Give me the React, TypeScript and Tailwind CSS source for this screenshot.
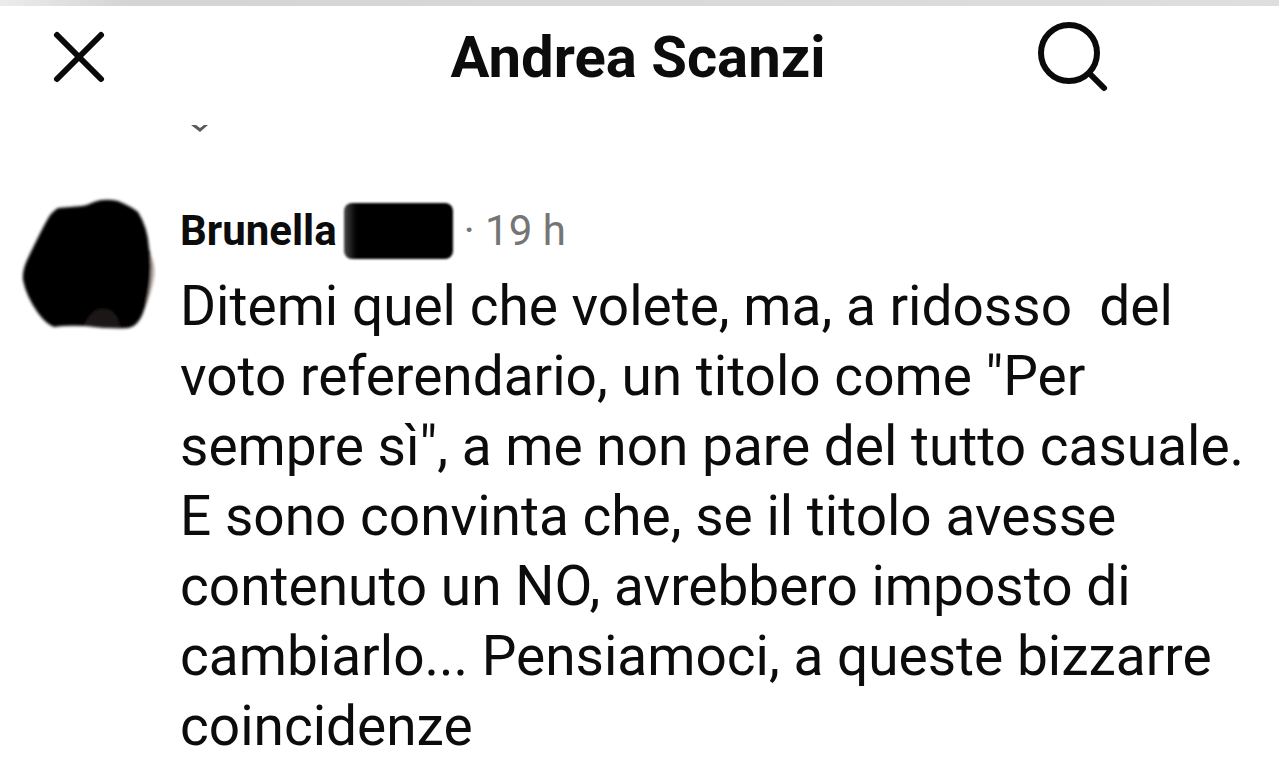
const comment = {
  author: 'Brunella',
  time: '19 h',
  text: 'Ditemi quel che volete, ma, a ridosso  del voto referendario, un titolo come "Per sempre sì", a me non pare del tutto casuale. E sono convinta che, se il titolo avesse contenuto un NO, avrebbero imposto di cambiarlo... Pensiamoci, a queste bizzarre coincidenze',
};

function Header({ title }: { title: string }) {
  return (
    <header className="grid grid-cols-[1fr_auto_1fr] items-center h-[102px] pl-[49px] pr-[52px]">
      <button type="button" aria-label="Chiudi" className="justify-self-start">
        <svg width="60" height="60" viewBox="0 0 60 60" fill="none" stroke="#0a0a0a" strokeWidth="6" strokeLinecap="round">
          <path d="M8 8 L52 52 M52 8 L8 52" />
        </svg>
      </button>
      <h1 className="text-[58px] leading-[70px] font-bold">{title}</h1>
      <button type="button" aria-label="Cerca" className="justify-self-end mr-[116px]">
        <svg width="76" height="76" viewBox="0 0 76 76" fill="none" stroke="#0a0a0a" strokeWidth="6" strokeLinecap="round">
          <circle cx="34" cy="34" r="28" />
          <path d="M55 55 L69 69" />
        </svg>
      </button>
    </header>
  );
}

function Avatar() {
  return (
    <svg className="shrink-0" width="136" height="136" viewBox="0 0 136 136" aria-hidden="true">
      <defs>
        <filter id="soft" x="-10%" y="-10%" width="120%" height="120%">
          <feGaussianBlur stdDeviation="1.5" />
        </filter>
      </defs>
      <g filter="url(#soft)">
        <path d="M126 52 Q137 66 134 82 Q131 100 123 114 L110 62 Z" fill="#b9aaa6" />
        <path
          d="M38 12 Q50 11 62 10 Q68 9 74 6 Q84 2 98 5 Q112 11 118 16 Q128 32 129 52 Q132 64 131 76 Q130 98 124 114 Q119 130 108 132 Q90 133 66 130 Q46 129 34 131 Q26 128 18 117 Q6 100 3 84 Q2 74 8 62 Q20 37 26 26 Q31 16 38 12 Z"
          fill="#000"
        />
        <path d="M64 129 Q72 112 84 113 Q97 114 100 131 Z" fill="#1d1715" />
      </g>
    </svg>
  );
}

export default function App() {
  return (
    <div className="bg-white text-[#0c0c0c] font-['Roboto','Liberation_Sans',sans-serif]">
      <div className="h-[6px] bg-linear-to-r from-[#ececec] via-[#d4d4d4] via-10% to-[#dedede]" />
      <Header title="Andrea Scanzi" />

      {/* fondo del commento precedente */}
      <div className="h-[88px] pl-[191px] pt-[17px]">
        <svg width="18" height="8" viewBox="0 0 18 8" fill="none" aria-hidden="true">
          <path d="M0 0 H5 L9 3 L13 0 H17 L9 7 Z" fill="#5a5a5a" />
        </svg>
      </div>

      <main className="pl-[20px] pr-[24px]">
        <article className="flex items-start gap-[24px]">
          <Avatar />
          <div className="flex-1 min-w-0">
            <div className="flex items-center h-[70px] mb-[5px] text-[42px] leading-[56px]">
              <h2 className="font-bold">{comment.author}</h2>
              <span className="ml-[7px] w-[109px] h-[56px] rounded-lg bg-linear-to-r from-[#4a4a4a] via-black via-15% to-black blur-[1px]" />
              <p className="ml-[11px] text-[#757575]">· {comment.time}</p>
            </div>
            <p className="text-[55px] leading-[70px] whitespace-pre-wrap">{comment.text}</p>
          </div>
        </article>
      </main>
    </div>
  );
}
